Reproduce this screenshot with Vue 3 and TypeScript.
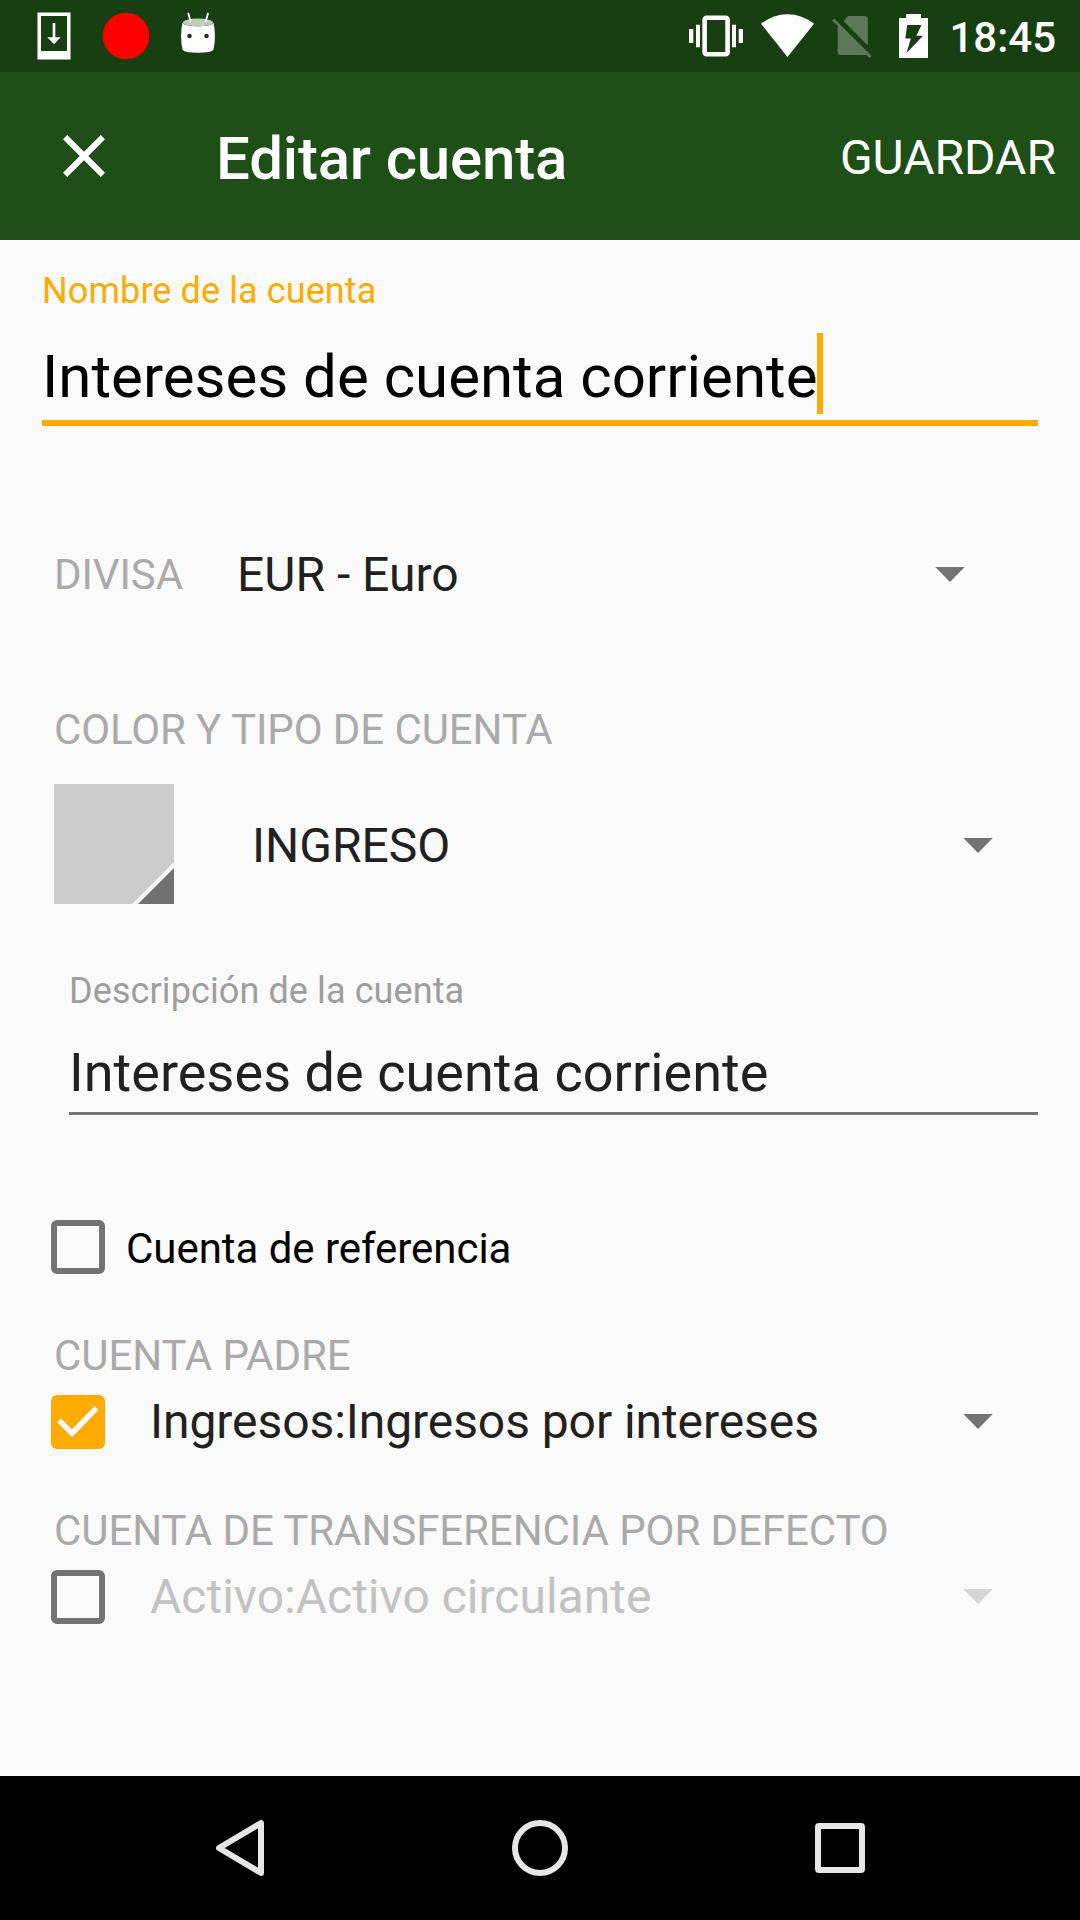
<script setup lang="ts">
import { ref } from 'vue'

interface LinkedAccount {
  label: string
  name: string
  enabled: boolean
}

const accountName = ref<string>('Intereses de cuenta corriente')
const description = ref<string>('Intereses de cuenta corriente')
const currency = ref<string>('EUR - Euro')
const accountType = ref<string>('INGRESO')
const linked = ref<LinkedAccount[]>([
  { label: 'CUENTA PADRE', name: 'Ingresos:Ingresos por intereses', enabled: true },
  { label: 'CUENTA DE TRANSFERENCIA POR DEFECTO', name: 'Activo:Activo circulante', enabled: false },
])
</script>

<template>
  <div class="screen">
    <header class="status">
      <svg class="status-left" width="216" height="72" viewBox="0 0 216 72">
        <path fill="#fff" fill-rule="evenodd" d="M37.5 12.5h33v47h-33zM41 16v35h26V16z" />
        <path fill="#fff" d="M52.7 23h2.6v14.3h5.4L54 44.3l-6.7-7h5.4z" />
        <circle cx="126" cy="36" r="23.3" fill="#f00" />
        <path fill="#fff" d="M182.500 22.500Q184 26.300 198 26.300T213.500 22.500Q216.400 36 213.500 49.500Q212 52.800 198 52.800T182.500 49.500Q179.600 36 182.500 22.500z" />
        <ellipse cx="198" cy="22.500" rx="15" ry="3.900" fill="#c1cbbf" />
        <path stroke="#fff" stroke-width="1.800" stroke-linecap="round" d="M188.300 13.500l2.200 7.500M208 13.500l-2.200 7.500" />
        <circle cx="189.500" cy="36" r="2.300" fill="#173f12" />
        <circle cx="206.500" cy="36" r="2.300" fill="#173f12" />
      </svg>
      <svg class="status-right" width="270" height="72" viewBox="0 0 270 72">
        <rect x="44.600" y="17.700" width="23" height="36.500" rx="2" fill="none" stroke="#fff" stroke-width="4.600" />
        <path fill="#fff" d="M29 29h4.300v14H29zM36 24.700h4v22.600h-4zM72 24.700h4v22.600h-4zM78.700 29H83v14h-4.300z" />
        <path fill="#fff" d="M101 23.800Q113 14.200 127.500 14.200T154 23.800L127.500 57z" />
        <g opacity=".3" fill="#fff">
          <path d="M188 16h16.500q3.300 0 3.300 3.300V45.500L183.700 21.200z" />
          <path d="M174 18.500l37.700 37.500-2 2-3.200-3H181q-3.300 0-3.300-3.300V25.800l-5.700-5.300z" />
        </g>
        <path fill="#fff" fill-rule="evenodd" d="M239 18h7.200v-4H261v4h7v40h-29zM247.200 25l-1.900 13.500h5.500L246.500 53 263 35.700h-6.600L261.500 25z" />
      </svg>
      <span class="clock">18:45</span>
    </header>

    <div class="toolbar">
      <svg class="close" width="72" height="72" viewBox="0 0 24 24">
        <path fill="#fff" d="M19 6.410L17.590 5 12 10.590 6.410 5 5 6.410 10.590 12 5 17.590 6.410 19 12 13.410 17.590 19 19 17.590 13.410 12z" />
      </svg>
      <h1>Editar cuenta</h1>
      <span class="save">GUARDAR</span>
    </div>

    <main>
      <div class="label accent">Nombre de la cuenta</div>
      <div class="name"><span>{{ accountName }}</span><i class="cursor"></i></div>

      <div class="currency">
        <span class="caption">DIVISA</span>
        <span class="value">{{ currency }}</span>
        <svg class="arrow" width="30" height="15" viewBox="0 0 30 15"><path d="M.3 0h29.400L15 15z" /></svg>
      </div>

      <div class="caption type-caption">COLOR Y TIPO DE CUENTA</div>
      <div class="type">
        <svg width="120" height="120" viewBox="0 0 120 120">
          <path fill="#ccc" d="M0 0h120v120H0z" />
          <path fill="#f5f5f5" d="M120 78v42H78z" />
          <path fill="#717171" d="M120 84v36H84z" />
        </svg>
        <span class="value">{{ accountType }}</span>
        <svg class="arrow" width="30" height="15" viewBox="0 0 30 15"><path d="M.3 0h29.400L15 15z" /></svg>
      </div>

      <div class="label muted">Descripción de la cuenta</div>
      <div class="description">{{ description }}</div>

      <div class="check-row">
        <span class="box"></span>
        <span class="check-text">Cuenta de referencia</span>
      </div>

      <section v-for="item in linked" :key="item.label" class="linked">
        <div class="caption">{{ item.label }}</div>
        <div class="linked-row" :class="{ disabled: !item.enabled }">
          <span class="box" :class="{ checked: item.enabled }">
            <svg v-if="item.enabled" width="54" height="54" viewBox="0 0 54 54">
              <path fill="none" stroke="#fafafa" stroke-width="5.600" d="M8 25.300L21 38.200 45.500 13" />
            </svg>
          </span>
          <span class="value">{{ item.name }}</span>
          <svg class="arrow" width="30" height="15" viewBox="0 0 30 15"><path d="M.3 0h29.400L15 15z" /></svg>
        </div>
      </section>
    </main>

    <nav>
      <svg width="56" height="60" viewBox="0 0 56 60"><path d="M49 5v50L7 30z" /></svg>
      <svg width="60" height="60" viewBox="0 0 60 60"><circle cx="30" cy="30" r="25" /></svg>
      <svg width="60" height="60" viewBox="0 0 60 60"><rect x="8" y="8" width="44" height="44" rx="1" /></svg>
    </nav>
  </div>
</template>

<style>
body {
  margin: 0;
}
</style>

<style scoped>
.screen {
  width: 1080px;
  height: 1920px;
  display: flex;
  flex-direction: column;
  overflow: hidden;
  background: #fafafa;
  font-family: Roboto, sans-serif;
  color: #212121;
  white-space: nowrap;
}
svg {
  display: block;
  flex: none;
}
.status {
  height: 72px;
  display: flex;
  background: #173f12;
}
.status-right {
  margin-left: 444px;
}
.clock {
  margin-left: auto;
  padding-right: 24px;
  font-size: 42px;
  font-weight: 500;
  line-height: 75px;
  color: #fff;
}
.toolbar {
  height: 168px;
  display: flex;
  align-items: center;
  background: #1d4f17;
  color: #fff;
}
.close {
  margin-left: 48px;
}
h1 {
  margin: 0 0 0 96px;
  font-size: 60px;
  font-weight: 500;
  line-height: 74px;
  padding-top: 5px;
  letter-spacing: -0.18px;
}
.save {
  margin-left: auto;
  padding-right: 24px;
  font-size: 48px;
  line-height: 60px;
  padding-top: 3px;
}
main {
  flex: 1;
  padding: 30px 42px 0;
}
.label {
  font-size: 36px;
  line-height: 42px;
  letter-spacing: 0.1px;
}
.accent {
  color: #ffab00;
}
.muted {
  margin: 66px 0 0 27px;
  color: #9e9e9e;
}
.name {
  display: flex;
  height: 84px;
  margin-top: 24px;
  border-bottom: 6px solid #ffab00;
  font-size: 60px;
  line-height: 81px;
  color: #000;
}
.cursor {
  width: 6px;
  height: 81px;
  margin: -3px 0 0 -1px;
  background: #ffab00;
}
.caption {
  font-size: 42px;
  line-height: 42px;
  letter-spacing: -0.08px;
  color: #aaa;
}
.value {
  font-size: 48px;
  line-height: 50px;
}
.arrow {
  margin-left: auto;
  fill: #737373;
}
.currency {
  display: flex;
  align-items: center;
  height: 49px;
  margin: 124px 73px 0 12px;
}
.currency .value {
  margin-left: 54px;
}
.type-caption {
  margin: 110px 0 0 12px;
}
.type {
  display: flex;
  align-items: center;
  height: 120px;
  margin: 33px 45px 0 12px;
}
.type .value {
  margin-left: 78px;
  padding-top: 4px;
}
.type .arrow {
  margin-top: 3px;
}
.description {
  height: 72px;
  margin: 28px 0 0 27px;
  border-bottom: 3px solid #757575;
  font-size: 54px;
  line-height: 66px;
  letter-spacing: 0.05px;
}
.check-row {
  display: flex;
  align-items: center;
  height: 54px;
  margin: 105px 0 0 9px;
}
.check-text {
  margin-left: 21px;
  padding-top: 3px;
  font-size: 42px;
  line-height: 50px;
  letter-spacing: -0.04px;
  color: #000;
}
.box {
  box-sizing: border-box;
  flex: none;
  width: 54px;
  height: 54px;
  border: 6px solid #737373;
  border-radius: 6px;
}
.box.checked {
  border: 0;
  background: #ffab00;
}
.linked {
  padding: 61px 45px 0 9px;
}
.linked .caption {
  margin-left: 3px;
}
.linked-row {
  display: flex;
  align-items: center;
  height: 54px;
  margin-top: 18px;
}
.linked-row .value {
  margin-left: 45px;
  letter-spacing: -0.07px;
}
.linked-row .arrow {
  margin-bottom: 1px;
}
.disabled .value {
  letter-spacing: 0;
  color: #c2c2c2;
}
.disabled .arrow {
  fill: #d5d5d5;
}
nav {
  height: 144px;
  display: flex;
  align-items: center;
  box-sizing: border-box;
  padding-left: 212px;
  background: #000;
}
nav svg {
  fill: none;
  stroke: #e6e6e6;
  stroke-width: 6;
  stroke-linejoin: round;
}
nav svg + svg {
  margin-left: 242px;
}
nav svg + svg + svg {
  margin-left: 240px;
}
</style>
